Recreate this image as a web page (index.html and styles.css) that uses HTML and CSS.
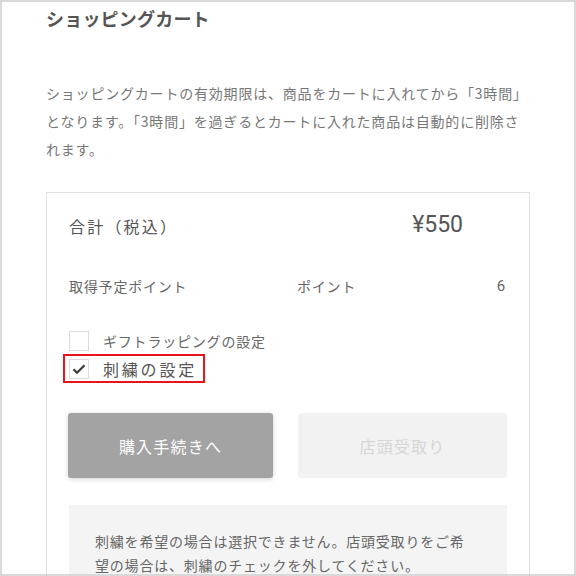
FILE: index.html
```html
<!DOCTYPE html>
<html lang="ja">
<head>
    <meta charset="UTF-8">
    <meta name="viewport" content="width=device-width, initial-scale=1.0">
    <title>ショッピングカート</title>
    <link rel="stylesheet" href="styles.css">
</head>
<body>
    <div class="frame">
        <div class="page">
            <h1 class="page-title">ショッピングカート</h1>
            <p class="cart-note">ショッピングカートの有効期限は、商品をカートに入れてから「3時間」となります。「3時間」を過ぎるとカートに入れた商品は自動的に削除されます。</p>

            <div class="summary">
                <div class="total-row">
                    <span class="total-label">合計（税込）</span>
                    <span class="price">¥550</span>
                </div>
                <div class="point-row">
                    <span>取得予定ポイント</span>
                    <span>ポイント</span>
                    <span class="point-value">6</span>
                </div>

                <div class="options">
                    <label class="option">
                        <span class="check-box"></span>
                        <span class="option-text">ギフトラッピングの設定</span>
                    </label>
                    <label class="option option-marked">
                        <span class="check-box">
                            <svg width="14" height="12" viewBox="0 0 14 12"><path d="M1.5 6.2 L5 9.8 L12.5 2.2" fill="none" stroke="#3c3c3c" stroke-width="2.2"/></svg>
                        </span>
                        <span class="option-text">刺繍の設定</span>
                    </label>
                </div>

                <div class="actions">
                    <button class="btn btn-buy">購入手続きへ</button>
                    <button class="btn btn-store" disabled>店頭受取り</button>
                </div>

                <div class="notice">
                    <p>刺繍を希望の場合は選択できません。店頭受取りをご希望の場合は、刺繍のチェックを外してください。</p>
                </div>
            </div>
        </div>
    </div>
</body>
</html>
```

FILE: styles.css
```css
body {
    margin: 0;
    padding: 0;
    background-color: #fff;
    font-family: "Noto Sans CJK JP", "Noto Sans", sans-serif;
}

.frame {
    width: 576px;
    height: 576px;
    box-sizing: border-box;
    border: 2px solid #d9d9d9;
    overflow: hidden;
}

.page {
    padding: 0 44px 0 44px;
}

.page-title {
    margin: 2px 0 0;
    font-size: 18px;
    line-height: 28px;
    font-weight: 700;
    color: #555;
    letter-spacing: 0.2px;
}

.cart-note {
    max-width: 480px;
    margin: 47px 0 0;
    font-size: 14px;
    line-height: 28px;
    color: #777;
    letter-spacing: 0.8px;
}

.summary {
    margin-top: 29px;
    border: 1px solid #e0e0e0;
    padding: 11px 22px 0 22px;
}

.total-row {
    display: flex;
    justify-content: space-between;
    align-items: center;
    height: 44px;
}

.total-label {
    font-size: 16px;
    color: #555;
    letter-spacing: 2.2px;
}

.price {
    font-family: Roboto, "Liberation Sans", sans-serif;
    font-size: 23px;
    color: #555;
    padding-right: 44px;
    padding-bottom: 4px;
}

.point-row {
    display: grid;
    grid-template-columns: 228px 1fr auto;
    align-items: center;
    height: 28px;
    margin-top: 24px;
    font-size: 14px;
    color: #666;
    letter-spacing: 0.8px;
}

.point-value {
    font-family: Roboto, "Liberation Sans", sans-serif;
    font-size: 15px;
    padding-right: 1px;
}

.options {
    margin-top: 27px;
}

.option {
    display: flex;
    align-items: center;
    height: 27px;
}

.check-box {
    display: flex;
    align-items: center;
    justify-content: center;
    width: 20px;
    height: 20px;
    box-sizing: border-box;
    border: 1px solid #dcdcdc;
    background-color: #fff;
}

.option-text {
    margin-left: 14px;
    font-size: 14px;
    color: #666;
    letter-spacing: 0.8px;
}

.option-marked {
    display: inline-flex;
    height: 25px;
    margin-left: -6px;
    padding: 0 6px 0 4px;
    border: 2px solid #e8131b;
}

.option-marked .option-text {
    font-size: 16px;
    color: #555;
    letter-spacing: 2.8px;
}

.actions {
    display: grid;
    grid-template-columns: 204px 1fr;
    gap: 25px;
    margin-top: 30px;
}

.btn {
    height: 65px;
    border: none;
    border-radius: 3px;
    font-family: "Noto Sans CJK JP", "Noto Sans", sans-serif;
    font-size: 16px;
    letter-spacing: 1.2px;
}

.btn-buy {
    margin-left: -1px;
    background-color: #a3a3a3;
    color: #fff;
    box-shadow: 0 1px 5px rgba(0, 0, 0, 0.18);
}

.btn-store {
    background-color: #f2f2f2;
    color: #d6d6d6;
}

.notice {
    margin-top: 27px;
    background-color: #f4f4f4;
    padding: 24px 28px 20px 26px;
}

.notice p {
    margin: 0;
    font-size: 14px;
    line-height: 24px;
    color: #666;
    letter-spacing: 0.8px;
}
```
